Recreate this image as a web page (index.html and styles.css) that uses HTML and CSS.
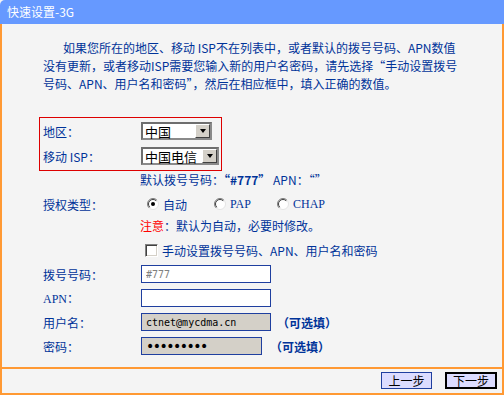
FILE: index.html
```html
<!DOCTYPE html>
<html lang="zh-CN">
<head>
<meta charset="utf-8">
<link rel="stylesheet" href="styles.css">
</head>
<body>
<div class="window">
  <div class="titlebar">快速设置-3G</div>
  <div class="panel">
    <div class="content">
      <p class="intro">如果您所在的地区、移动 ISP不在列表中，或者默认的拨号号码、APN数值<br>没有更新，或者移动ISP需要您输入新的用户名密码，请先选择<span class="fw">“</span>手动设置拨号<br>号码、APN、用户名和密码<span class="fw">”</span>，然后在相应框中，填入正确的数值。</p>

      <div class="region-box">
        <div class="row">
          <span class="label">地区：</span>
          <div class="select sel-country"><span class="val">中国</span><span class="arrow"><span class="tri"></span></span></div>
        </div>
        <div class="row">
          <span class="label">移动 ISP：</span>
          <div class="select sel-isp"><span class="val">中国电信</span><span class="arrow"><span class="tri"></span></span></div>
        </div>
      </div>

      <div class="form">
        <div class="row r-default">
          <span class="label"></span>
          <span class="info">默认拨号号码：<b><span class="fw">“</span>#777<span class="fw">”</span></b> APN：<span class="fw">“”</span></span>
        </div>
        <div class="row r-auth">
          <span class="label">授权类型：</span>
          <div class="radios">
            <span class="radio-item ri-1">
              <svg width="12" height="12" viewBox="0 0 12 12"><circle cx="6" cy="6" r="5.5" fill="#fff" stroke="#e4e4e4"/><path d="M2.1 9.9 A5.5 5.5 0 0 1 9.9 2.1" fill="none" stroke="#808080"/><path d="M2.8 9.2 A4.5 4.5 0 0 1 9.2 2.8" fill="none" stroke="#404040"/><circle cx="6" cy="6" r="2" fill="#000"/></svg>
              <span>自动</span>
            </span>
            <span class="radio-item ri-2">
              <svg width="12" height="12" viewBox="0 0 12 12"><circle cx="6" cy="6" r="5.5" fill="#fff" stroke="#e4e4e4"/><path d="M2.1 9.9 A5.5 5.5 0 0 1 9.9 2.1" fill="none" stroke="#808080"/><path d="M2.8 9.2 A4.5 4.5 0 0 1 9.2 2.8" fill="none" stroke="#404040"/></svg>
              <span class="latin">PAP</span>
            </span>
            <span class="radio-item ri-3">
              <svg width="12" height="12" viewBox="0 0 12 12"><circle cx="6" cy="6" r="5.5" fill="#fff" stroke="#e4e4e4"/><path d="M2.1 9.9 A5.5 5.5 0 0 1 9.9 2.1" fill="none" stroke="#808080"/><path d="M2.8 9.2 A4.5 4.5 0 0 1 9.2 2.8" fill="none" stroke="#404040"/></svg>
              <span class="latin">CHAP</span>
            </span>
          </div>
        </div>
        <div class="row r-note">
          <span class="label"></span>
          <span class="info"><span class="warn">注意</span>：默认为自动，必要时修改。</span>
        </div>
        <div class="row r-check">
          <span class="label"></span>
          <span class="check-wrap"><span class="checkbox"></span><span>手动设置拨号号码、APN、用户名和密码</span></span>
        </div>
        <div class="row r-input">
          <span class="label">拨号号码：</span>
          <input class="field" type="text" placeholder="#777">
        </div>
        <div class="row r-input">
          <span class="label latin">APN：</span>
          <input class="field" type="text">
        </div>
        <div class="row r-input">
          <span class="label">用户名：</span>
          <input class="field locked" type="text" value="ctnet@mycdma.cn">
          <span class="optional">（可选填）</span>
        </div>
        <div class="row r-input">
          <span class="label">密码：</span>
          <input class="field locked short" type="password" value="123456789">
          <span class="optional">（可选填）</span>
        </div>
      </div>
    </div>
    <div class="footer">
      <button class="btn">上一步</button>
      <button class="btn focused">下一步</button>
    </div>
  </div>
</div>
</body>
</html>
```

FILE: styles.css
```css
html, body {
  margin: 0;
  padding: 0;
  width: 504px;
  height: 395px;
  overflow: hidden;
  background: #f4f4f4;
}

.window {
  width: 504px;
  height: 395px;
  display: flex;
  flex-direction: column;
  font-family: "Noto Sans CJK SC", "Liberation Sans", sans-serif;
  font-size: 12px;
  color: #003399;
}

.fw {
  font-feature-settings: "fwid" 1;
}

.titlebar {
  height: 24px;
  line-height: 24px;
  background: #6699ff;
  color: #ffffff;
  padding-left: 7px;
  font-size: 12px;
  border-top-left-radius: 5px;
}

.panel {
  flex: 1;
  display: flex;
  flex-direction: column;
  background: #f4f4f4;
  border-left: 2px solid #ff9933;
  border-right: 2px solid #ff9933;
  border-bottom: 2px solid #ff9933;
}

.content {
  box-sizing: border-box;
  border-bottom: 2px solid #ff9933;
  padding-top: 15px;
  height: 345px;
}

.intro {
  margin: 0;
  padding-left: 41px;
  text-indent: 20px;
  line-height: 18px;
  white-space: nowrap;
}

.region-box {
  margin: 24px 0 0 37px;
  width: 183px;
  height: 54px;
  box-sizing: border-box;
  border: 1px solid #dd0000;
  padding: 4px 0 0 3px;
  display: flex;
  flex-direction: column;
  gap: 7px;
}

.row {
  display: flex;
  align-items: center;
}

.label {
  width: 98px;
  flex: none;
  white-space: nowrap;
}

.select {
  height: 18px;
  box-sizing: border-box;
  border: 2px solid #6e6e6e;
  border-right-color: #8a8a8a;
  border-bottom-color: #8a8a8a;
  background: #ffffff;
  display: flex;
  align-items: stretch;
  color: #000;
  font-size: 13px;
}

.sel-country { width: 71px; }
.sel-isp { width: 78px; }

.select .val {
  flex: 1;
  display: flex;
  align-items: center;
  padding-left: 2px;
  white-space: nowrap;
  line-height: 1;
}

.select .arrow {
  width: 15px;
  flex: none;
  box-sizing: border-box;
  background: #d4d0c8;
  border-style: solid;
  border-width: 1px;
  border-color: #ffffff #404040 #404040 #ffffff;
  display: flex;
  align-items: center;
  justify-content: center;
}

.tri {
  width: 0;
  height: 0;
  border-left: 3.5px solid transparent;
  border-right: 3.5px solid transparent;
  border-top: 4px solid #000;
}

.form {
  padding-left: 41px;
  display: flex;
  flex-direction: column;
}

.r-default {
  height: 16px;
}

.r-default .info {
  margin-left: -1px;
}

.info b {
  font-weight: bold;
}

.r-auth {
  height: 20px;
  margin-top: 7px;
}

.radios {
  display: flex;
  align-items: center;
  margin-left: 6px;
}

.radio-item {
  display: flex;
  align-items: center;
  gap: 4px;
}

.ri-1 { width: 67px; }
.ri-2 { width: 63px; }

.radio-item svg {
  display: block;
  flex: none;
}

.latin {
  font-family: "Liberation Serif", serif;
  font-size: 12px;
}

.r-note {
  height: 22px;
}

.r-note .info {
  margin-left: -1px;
}

.warn {
  color: #ff0000;
}

.r-check {
  height: 29px;
}

.check-wrap {
  display: flex;
  align-items: center;
  gap: 4px;
  margin-left: 4px;
}

.checkbox {
  width: 13px;
  height: 13px;
  box-sizing: border-box;
  background: #ffffff;
  border-style: solid;
  border-width: 1px;
  border-color: #808080 #ffffff #ffffff #808080;
  box-shadow: inset 1px 1px 0 #404040, inset -1px -1px 0 #d4d0c8;
}

.r-input {
  height: 18px;
  margin-bottom: 6px;
}

.field {
  width: 130px;
  height: 18px;
  box-sizing: border-box;
  margin: 0;
  padding: 0 4px;
  border: 1px solid #1f3f9f;
  background: #ffffff;
  font-family: "DejaVu Sans Mono", "Liberation Mono", monospace;
  font-size: 10px;
  color: #000;
  outline: none;
}

.field::placeholder {
  color: #808080;
}

.field.locked {
  background: #d4d0c8;
}

.field.short {
  width: 121px;
  font-family: "DejaVu Sans", sans-serif;
  font-size: 14px;
  letter-spacing: -1.5px;
}

.optional {
  margin-left: 6px;
  font-weight: bold;
  white-space: nowrap;
}

.short + .optional {
  margin-left: 8px;
}

.footer {
  flex: 1;
  display: flex;
  justify-content: flex-end;
  align-items: flex-start;
  padding: 3px 5px 0 0;
  gap: 13px;
}

.btn {
  width: 51px;
  height: 17px;
  box-sizing: border-box;
  margin: 0;
  padding: 0;
  background: #dcdcff;
  border: 1px solid #1f3f9f;
  font-family: "Noto Sans CJK SC", sans-serif;
  font-size: 12px;
  line-height: 14px;
  color: #000;
}

.btn.focused {
  width: 52px;
  border: 2px solid #000;
}
```
